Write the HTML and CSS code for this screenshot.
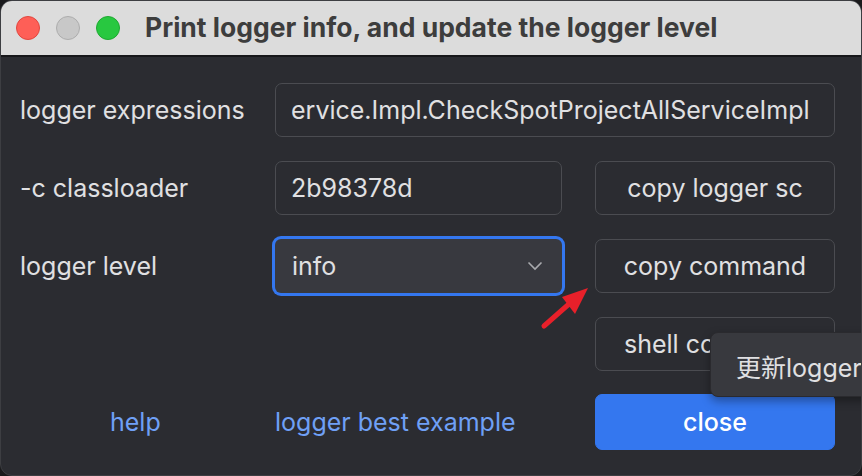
FILE: index.html
```html
<!DOCTYPE html>
<html lang="en">
<head>
    <meta charset="UTF-8">
    <title>Print logger info, and update the logger level</title>
    <link rel="stylesheet" href="styles.css">
</head>
<body>
    <div class="window">
        <div class="titlebar">
            <div class="lights">
                <span class="light close-light"></span>
                <span class="light min-light"></span>
                <span class="light max-light"></span>
            </div>
            <div class="title">Print logger info, and update the logger level</div>
        </div>

        <div class="form">
            <div class="label">logger expressions</div>
            <div class="field wide">ervice.Impl.CheckSpotProjectAllServiceImpl</div>

            <div class="label">-c classloader</div>
            <div class="field">2b98378d</div>
            <button class="btn">copy logger sc</button>

            <div class="label">logger level</div>
            <div class="select">
                <span>info</span>
                <svg class="chevron" width="16" height="10" viewBox="0 0 16 10"><path d="M1.5 1.5 L8 8 L14.5 1.5" fill="none" stroke="#a9aaae" stroke-width="1.6"/></svg>
            </div>
            <button class="btn">copy command</button>

            <div></div>
            <div></div>
            <button class="btn shell">shell command</button>

            <a class="link help" href="#">help</a>
            <a class="link" href="#">logger best example</a>
            <button class="btn primary">close</button>
        </div>

        <div class="tooltip">更新logger level</div>

        <svg class="arrow" width="60" height="50" viewBox="0 0 60 50">
            <path d="M5 43 L30 21" stroke="#e8202a" stroke-width="5" stroke-linecap="round"/>
            <polygon points="49,5 23,14 36,31" fill="#e8202a"/>
        </svg>
    </div>
</body>
</html>
```

FILE: styles.css
```css
:root {
    --bg: #2b2c31;
    --text: #e0e0e2;
    --border: #4b4c51;
    --blue: #3477ef;
    --link: #6fa0f6;
}

html, body {
    margin: 0;
    padding: 0;
    background: #1a1a1c;
}

body {
    font-family: Inter, "Noto Sans", "Noto Sans CJK SC", sans-serif;
    color: var(--text);
}

.window {
    position: relative;
    width: 862px;
    height: 476px;
    background: var(--bg);
    border-radius: 12px;
    overflow: hidden;
    box-sizing: border-box;
    border: 1px solid #3d3e42;
}

.titlebar {
    height: 54px;
    background: #dcdcdc;
    border-bottom: 2px solid #17171a;
    display: flex;
    align-items: center;
}

.lights {
    display: flex;
    gap: 16px;
    padding-left: 15px;
    margin-right: 25px;
}

.light {
    width: 24px;
    height: 24px;
    border-radius: 50%;
    box-sizing: border-box;
}

.close-light { background: #fe5f57; border: 1px solid #e1473f; }
.min-light { background: #c8c8c8; border: 1px solid #adadad; }
.max-light { background: #28c840; border: 1px solid #1ea931; }

.title {
    font-weight: 700;
    font-size: 26.5px;
    color: #3d3d3d;
    padding-bottom: 2px;
    white-space: nowrap;
}

.form {
    display: grid;
    grid-template-columns: 222px 287px 240px;
    column-gap: 33px;
    row-gap: 24px;
    grid-auto-rows: 54px;
    padding: 26px 0 0 19px;
    align-items: center;
    font-size: 25px;
}

.label {
    white-space: nowrap;
}

.field {
    height: 54px;
    box-sizing: border-box;
    border: 1.5px solid var(--border);
    border-radius: 7px;
    padding: 0 15px;
    display: flex;
    align-items: center;
    white-space: nowrap;
    overflow: hidden;
}

.field.wide {
    grid-column: 2 / 4;
}

.select {
    height: 54px;
    box-sizing: border-box;
    background: #38393f;
    border-radius: 6px;
    box-shadow: 0 0 0 3px var(--blue);
    padding: 0 19px 0 17px;
    display: flex;
    align-items: center;
    justify-content: space-between;
}

.btn {
    height: 54px;
    font: inherit;
    color: var(--text);
    background: transparent;
    border: 1.5px solid var(--border);
    border-radius: 7px;
    white-space: nowrap;
    overflow: hidden;
}

.btn.shell {
    text-align: left;
    padding-left: 28px;
}

.btn.primary {
    background: var(--blue);
    border-color: var(--blue);
    color: #fff;
    font-weight: 500;
    height: 56px;
}

.link {
    color: var(--link);
    text-decoration: none;
    white-space: nowrap;
}

.help {
    padding-left: 90px;
}

.tooltip {
    position: absolute;
    left: 709px;
    top: 331px;
    width: 200px;
    height: 65px;
    box-sizing: border-box;
    background: #38393e;
    border: 1px solid #2a2a2e;
    border-radius: 8px;
    box-shadow: 0 4px 10px rgba(0, 0, 0, 0.35);
    padding: 15px 0 0 25px;
    font-size: 25px;
    white-space: nowrap;
    overflow: hidden;
}

.arrow {
    position: absolute;
    left: 538px;
    top: 282px;
}
```
